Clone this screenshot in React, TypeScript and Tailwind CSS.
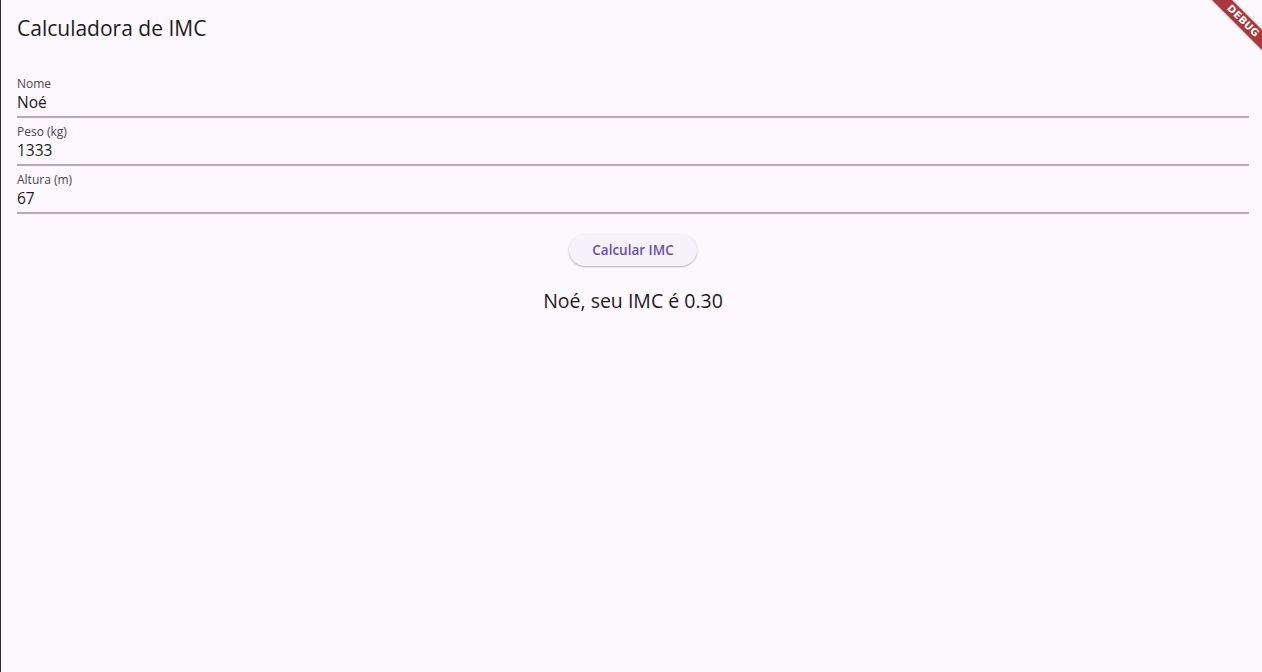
export default function App() {
  const font = { fontFamily: '"Open Sans", "Noto Sans", sans-serif' };
  return (
    <div className="relative w-[1262px] h-[672px] overflow-hidden bg-[#fdf7fe] flex" style={font}>
      <div className="w-[1px] h-full bg-[#2b2b33] shrink-0" />
      <div className="flex-1 flex flex-col pl-[16px] pr-[13px]">
        <div className="h-[56px] flex items-center">
          <span className="text-[21px] text-[#1d1b20] leading-none">Calculadora de IMC</span>
        </div>
        <div className="pt-[20px] flex flex-col gap-[6px]">
          {[
            ["Nome", "Noé"],
            ["Peso (kg)", "1333"],
            ["Altura (m)", "67"],
          ].map(([label, value]) => (
            <div key={label} className="h-[42px] flex flex-col border-b-[2px] border-[#b3abb5]">
              <span className="text-[12px] text-[#49454f] leading-[14px] mt-[1px]">{label}</span>
              <span className="text-[15.5px] text-[#1d1b20] leading-[20px] mt-[1px]">{value}</span>
            </div>
          ))}
        </div>
        <div className="flex flex-col items-center">
          <button className="mt-[20px] h-[32px] w-[128px] rounded-full bg-[#f7f2fa] shadow-[0_1px_2px_rgba(0,0,0,0.3)] text-[13.5px] font-semibold text-[#6750a4]">
            Calcular IMC
          </button>
          <div className="mt-[22px] text-[19.5px] text-[#1d1b20] leading-[26px]">Noé, seu IMC é 0.30</div>
        </div>
      </div>
      <div className="absolute top-[14px] right-[-33px] w-[104px] h-[14px] rotate-45 bg-[#a83a3e] flex items-center justify-center shadow-[0_0_3px_rgba(0,0,0,0.35)]">
        <span className="text-[10px] font-bold text-white tracking-wide leading-none" style={{ fontFamily: '"DejaVu Sans", sans-serif' }}>DEBUG</span>
      </div>
    </div>
  );
}
